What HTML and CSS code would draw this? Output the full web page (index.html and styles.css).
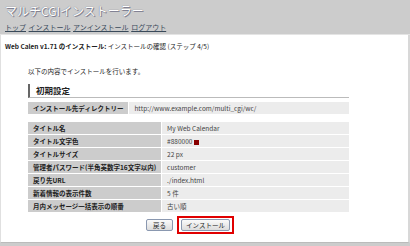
FILE: index.html
```
<!DOCTYPE html>
<html lang="ja">
<head>
  <meta charset="UTF-8">
  <title>マルチCGIインストーラー</title>
  <link rel="stylesheet" href="styles.css">
</head>
<body>
  <div class="header">
    <h1>マルチCGIインストーラー</h1>
    <div class="nav">
      <a href="#">トップ</a>
      <a href="#">インストール</a>
      <a href="#">アンインストール</a>
      <a href="#">ログアウト</a>
    </div>
  </div>

  <div class="main">
    <p class="step"><b>Web Calen v1.71 のインストール:</b> インストールの確認 (ステップ 4/5)</p>

    <div class="content">
      <p class="intro">以下の内容でインストールを行います。</p>

      <h2 class="section">初期設定</h2>

      <table class="conf dir">
        <tr><th>インストール先ディレクトリー</th><td>http://www.example.com/multi_cgi/wc/</td></tr>
      </table>

      <table class="conf">
        <tr><th>タイトル名</th><td>My Web Calendar</td></tr>
        <tr><th>タイトル文字色</th><td>#880000 <span class="swatch"></span></td></tr>
        <tr><th>タイトルサイズ</th><td>22 px</td></tr>
        <tr><th>管理者パスワード(半角英数字16文字以内)</th><td>customer</td></tr>
        <tr><th>戻り先URL</th><td>./index.html</td></tr>
        <tr><th>新着情報の表示件数</th><td>5 件</td></tr>
        <tr><th>月内メッセージ一括表示の順番</th><td>古い順</td></tr>
      </table>

      <div class="buttons">
        <button class="btn">戻る</button>
        <span class="mark"><button class="btn wide">インストール</button></span>
      </div>
    </div>
  </div>
</body>
</html>
```

FILE: styles.css
```
body {
  margin: 0;
  background-color: #cccccc;
  font-family: "Noto Sans CJK JP", "Liberation Sans", sans-serif;
  color: #222;
}

/* Header */
.header {
  height: 35px;
  padding: 3px 5px 0;
  box-sizing: border-box;
  border-bottom: 1px solid #e4e4e4;
}

.header h1 {
  margin: 0;
  font-size: 12px;
  line-height: 16px;
  font-weight: normal;
  color: #ffffff;
  text-shadow: 0 0 1px #556, 1px 1px 0 #889;
}

.nav {
  margin-top: 3px;
  font-size: 7px;
  line-height: 10px;
}

.nav a {
  color: #3a4a5a;
  margin-right: 1px;
}

/* Main panel */
.main {
  background-color: #ffffff;
  height: 208px;
  box-sizing: border-box;
  border-left: 1px solid #e0e0e0;
  border-right: 2px solid #d8d8d8;
  border-bottom: 1px solid #bbbbbb;
  padding-top: 6px;
}

.step {
  margin: 0 0 0 4px;
  font-size: 6.5px;
  line-height: 10px;
}

.content {
  margin-left: 27px;
  width: 321px;
}

.intro {
  margin: 15px 0 0;
  font-size: 6.5px;
  line-height: 10px;
}

.section {
  margin: 8px 0 0;
  padding-left: 6px;
  font-size: 8.5px;
  line-height: 13px;
  border-left: 2px solid #666;
  border-bottom: 1px solid #bbb;
}

/* Settings tables */
.conf {
  width: 321px;
  border-collapse: separate;
  border-spacing: 0 1.6px;
  font-size: 6.5px;
}

.conf th,
.conf td {
  height: 12px;
  padding: 0 5px;
  box-sizing: border-box;
  text-align: left;
  white-space: nowrap;
}

.conf th {
  background-color: #cccccc;
  width: 127px;
}

.conf td {
  background-color: #ececec;
  color: #444;
  border-left: 1px solid #fff;
}

.dir {
  margin-top: 3px;
}

.dir th {
  width: 97px;
}

.conf + .conf {
  margin-top: 6px;
}

.swatch {
  display: inline-block;
  width: 5px;
  height: 5px;
  background-color: #880000;
  vertical-align: middle;
}

/* Buttons */
.buttons {
  margin-top: 3px;
  padding-left: 118px;
  display: flex;
  align-items: center;
  gap: 4px;
}

.btn {
  height: 12px;
  width: 27px;
  padding: 0;
  font-family: inherit;
  font-size: 6.5px;
  line-height: 10px;
  background: linear-gradient(#fafafa, #dcdcdc);
  border: 1px solid #8a98b0;
  border-radius: 2px;
  color: #222;
}

.btn.wide {
  width: 49px;
}

.mark {
  display: inline-block;
  border: 2px solid #e00000;
  padding: 1px 2px;
  line-height: 0;
}
```
